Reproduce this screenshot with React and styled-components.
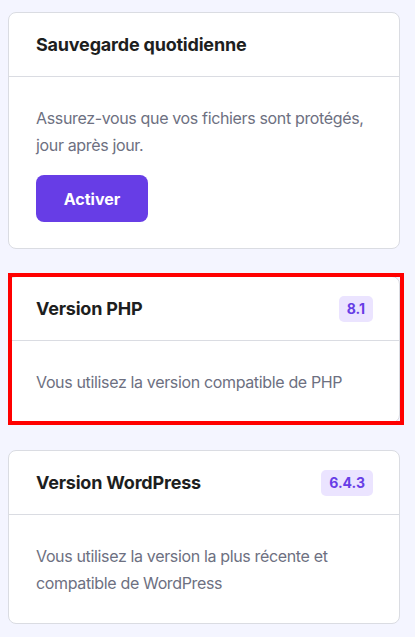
import React from 'react';
import styled, { createGlobalStyle } from 'styled-components';

const GlobalStyle = createGlobalStyle`
  body {
    margin: 0;
    background: #f4f5ff;
    font-family: Inter, "Noto Sans", sans-serif;
    -webkit-font-smoothing: antialiased;
  }
`;

// Column of settings cards
const Page = styled.div`
  display: flex;
  flex-direction: column;
  gap: 27px;
  padding: 12px 15px 12px 8px;
`;

const Card = styled.section`
  position: relative;
  background: #fff;
  border: 1px solid #dadce2;
  border-radius: 8px;
`;

// Red annotation frame drawn over the card
const Highlight = styled.div`
  position: absolute;
  top: -4px;
  left: -1px;
  right: -5px;
  bottom: -3px;
  border: 4px solid #ff0000;
  pointer-events: none;
`;

const CardHeader = styled.header`
  display: flex;
  align-items: center;
  justify-content: space-between;
  height: 63px;
  padding: 0 26px 0 27px;
  border-bottom: 1px solid #dadce2;
`;

const Title = styled.h3`
  margin: 0;
  font-size: 18px;
  line-height: 23px;
  font-weight: 700;
  letter-spacing: -0.2px;
  color: #1d1e20;
`;

const Badge = styled.span`
  display: inline-flex;
  align-items: center;
  height: 26px;
  padding: 0 8px;
  border-radius: 5px;
  background: #ebe4ff;
  color: #673de6;
  font-size: 14px;
  font-weight: 700;
`;

const CardBody = styled.div`
  padding: 28px 27px 26px;
`;

const Text = styled.p`
  margin: 0;
  font-size: 16px;
  line-height: 27px;
  letter-spacing: -0.35px;
  color: #6d7081;
`;

const Button = styled.button`
  margin-top: 16px;
  width: 112px;
  height: 47px;
  border: none;
  border-radius: 8px;
  background: #673de6;
  color: #fff;
  font-family: inherit;
  font-size: 16px;
  font-weight: 700;
  cursor: pointer;
`;

function SettingCard({ title, badge, highlighted, children }) {
  return (
    <Card>
      <CardHeader>
        <Title>{title}</Title>
        {badge && <Badge>{badge}</Badge>}
      </CardHeader>
      <CardBody>{children}</CardBody>
      {highlighted && <Highlight />}
    </Card>
  );
}

export default function App() {
  return (
    <>
      <GlobalStyle />
      <Page>
        <SettingCard title="Sauvegarde quotidienne">
          <Text>Assurez-vous que vos fichiers sont protégés, jour après jour.</Text>
          <Button>Activer</Button>
        </SettingCard>
        <SettingCard title="Version PHP" badge="8.1" highlighted>
          <Text>Vous utilisez la version compatible de PHP</Text>
        </SettingCard>
        <SettingCard title="Version WordPress" badge="6.4.3">
          <Text>Vous utilisez la version la plus récente et compatible de WordPress</Text>
        </SettingCard>
      </Page>
    </>
  );
}
